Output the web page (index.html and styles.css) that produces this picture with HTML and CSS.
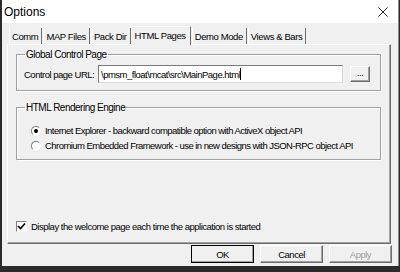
FILE: index.html
```html
<!DOCTYPE html>
<html lang="en">
<head>
    <meta charset="UTF-8">
    <title>Options</title>
    <link rel="stylesheet" href="styles.css">
</head>
<body>
    <div class="window">
        <div class="titlebar">
            <span class="title">Options</span>
            <svg class="close" width="10" height="10" viewBox="0 0 10 10">
                <path d="M0.5 0.5 L9.5 9.5 M9.5 0.5 L0.5 9.5" stroke="#222" stroke-width="1" fill="none"/>
            </svg>
        </div>

        <div class="content">
            <div class="tabs">
                <div class="tab">Comm</div>
                <div class="tab">MAP Files</div>
                <div class="tab">Pack Dir</div>
                <div class="tab active">HTML Pages</div>
                <div class="tab">Demo Mode</div>
                <div class="tab">Views &amp; Bars</div>
            </div>

            <div class="panel">
                <fieldset class="group group-url">
                    <legend>Global Control Page</legend>
                    <div class="url-row">
                        <span class="label">Control page URL:</span>
                        <div class="input">\pmsm_float\mcat\src\MainPage.html<span class="caret"></span></div>
                        <div class="btn small">...</div>
                    </div>
                </fieldset>

                <fieldset class="group group-engine">
                    <legend>HTML Rendering Engine</legend>
                    <div class="radio-row">
                        <span class="radio checked"></span>
                        <span>Internet Explorer - backward compatible option with ActiveX object API</span>
                    </div>
                    <div class="radio-row">
                        <span class="radio"></span>
                        <span>Chromium Embedded Framework - use in new designs with JSON-RPC object API</span>
                    </div>
                </fieldset>

                <div class="check-row">
                    <span class="checkbox">
                        <svg width="9" height="9" viewBox="0 0 9 9">
                            <path d="M1 4 L3.5 6.5 L8 1.5" stroke="#000" stroke-width="1.6" fill="none"/>
                        </svg>
                    </span>
                    <span>Display the welcome page each time the application is started</span>
                </div>
            </div>

            <div class="buttons">
                <div class="btn default">OK</div>
                <div class="btn">Cancel</div>
                <div class="btn disabled">Apply</div>
            </div>
        </div>
    </div>
</body>
</html>
```

FILE: styles.css
```css
* {
    margin: 0;
    padding: 0;
    box-sizing: border-box;
}

body, html {
    height: 100%;
    background-color: #2b2b2b;
    font-family: "Liberation Sans", Arial, sans-serif;
    font-size: 9.5px;
    letter-spacing: -0.5px;
    color: #000;
}

.window {
    width: 397px;
    height: 266px;
    margin-left: 2px;
    background-color: #f0f0f0;
    border-right: 1px solid #8a8a8a;
    display: flex;
    flex-direction: column;
}

.titlebar {
    height: 23px;
    background-color: #fff;
    display: flex;
    align-items: center;
    justify-content: space-between;
    padding: 0 10px 0 2px;
}

.title {
    font-size: 12px;
    letter-spacing: 0;
}

.content {
    padding: 2px 5px 0 5px;
    display: flex;
    flex-direction: column;
}

.tabs {
    display: flex;
    align-items: flex-end;
    height: 19px;
    padding-left: 2px;
}

.tab {
    height: 16px;
    padding: 3px 3px 0 2px;
    border-right: 1px solid #6d6d6d;
    border-left: 1px solid #fff;
    margin-right: 1px;
    white-space: nowrap;
    letter-spacing: -0.4px;
}

.tab.active {
    height: 19px;
    padding: 3px 4px 0 3px;
    border-top: 1px solid #fff;
    margin: 0 1px 0 -1px;
    position: relative;
    top: 1px;
    background-color: #f0f0f0;
    z-index: 1;
}

.panel {
    height: 200px;
    margin-right: 2px;
    border-top: 1px solid #fff;
    border-left: 1px solid #fff;
    border-right: 1px solid #6d6d6d;
    border-bottom: 1px solid #6d6d6d;
    box-shadow: inset -1px -1px #a0a0a0;
    padding: 4px 9px 0 8px;
    display: flex;
    flex-direction: column;
}

.group {
    min-width: 0;
    border: 1px solid #a0a0a0;
    box-shadow: inset 1px 1px #fff, 1px 1px #fff;
    padding: 0 6px 0 6px;
}

.group legend {
    padding: 0 1px;
    margin-left: 2px;
    font-size: 10px;
}

.group-url {
    height: 42px;
}

.url-row {
    display: flex;
    align-items: center;
    margin-top: 5px;
}

.label {
    width: 75px;
    white-space: nowrap;
    padding-left: 1px;
}

.input {
    width: 245px;
    height: 18px;
    background-color: #fff;
    border-top: 1px solid #7a7a7a;
    border-left: 1px solid #7a7a7a;
    border-right: 1px solid #dcdcdc;
    border-bottom: 1px solid #dcdcdc;
    padding: 2px 2px;
    white-space: nowrap;
    overflow: hidden;
}

.caret {
    display: inline-block;
    width: 1px;
    height: 12px;
    background-color: #000;
    vertical-align: -2px;
}

.group-engine {
    margin-top: 11px;
    height: 58px;
    padding-top: 10px;
}

.radio-row {
    display: flex;
    align-items: center;
    height: 15px;
    gap: 4px;
    padding-left: 8px;
    white-space: nowrap;
    letter-spacing: -0.55px;
}

.radio {
    flex: none;
    width: 10px;
    height: 10px;
    border-radius: 50%;
    background-color: #fff;
    border: 1px solid;
    border-color: #808080 #fff #fff #808080;
    box-shadow: 0 0 0 0.5px #e0e0e0;
    position: relative;
}

.radio.checked::after {
    content: "";
    position: absolute;
    left: 2px;
    top: 2px;
    width: 4px;
    height: 4px;
    border-radius: 50%;
    background-color: #000;
}

.check-row {
    margin-top: auto;
    margin-bottom: 11px;
    display: flex;
    align-items: center;
    gap: 4px;
}

.checkbox {
    width: 11px;
    height: 11px;
    background-color: #fff;
    border: 1px solid;
    border-color: #808080 #fff #fff #808080;
    display: flex;
    align-items: center;
    justify-content: center;
}

.buttons {
    display: flex;
    justify-content: flex-end;
    gap: 6px;
    margin-top: 1px;
    margin-right: 1px;
}

.btn {
    width: 63px;
    height: 18px;
    display: flex;
    align-items: center;
    justify-content: center;
    background-color: #f0f0f0;
    border-top: 1px solid #fff;
    border-left: 1px solid #fff;
    border-right: 1px solid #6d6d6d;
    border-bottom: 1px solid #6d6d6d;
    box-shadow: inset -1px -1px #a0a0a0;
}

.btn.default {
    outline: 1px solid #000;
    outline-offset: -1px;
    border-color: #fff #444 #444 #fff;
}

.btn.disabled {
    color: #a0a0a0;
}

.btn.small {
    width: 20px;
    height: 16px;
    margin-left: 7px;
    font-size: 9px;
    align-items: flex-end;
    padding-bottom: 3px;
}
```
